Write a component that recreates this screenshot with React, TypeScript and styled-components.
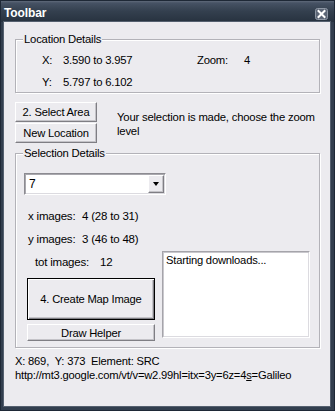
import styled, { createGlobalStyle } from 'styled-components'

const FACE = '#ecebef'

const GlobalStyle = createGlobalStyle`
  html, body {
    margin: 0;
    padding: 0;
  }
  body {
    font-family: "Liberation Sans", Arial, sans-serif;
    font-size: 11px;
    letter-spacing: -0.2px;
    color: #000;
  }
`

const Window = styled.div`
  width: 335px;
  height: 411px;
  box-sizing: border-box;
  display: flex;
  flex-direction: column;
  background: #323e4e;
  border: 1px solid #1e2836;
`

const TitleBar = styled.div`
  height: 21px;
  flex: none;
  display: flex;
  align-items: flex-start;
  justify-content: space-between;
  padding: 0 6px 0 3px;
  background: linear-gradient(#5f6a7b 0, #465264 2px, #34404f 10px, #27323f 100%);
`

const Title = styled.span`
  padding-top: 5px;
  line-height: 14px;
  font-size: 12px;
  font-weight: bold;
  color: #fff;
  letter-spacing: -0.1px;
`

const CloseBox = styled.svg`
  margin-top: 7px;
  display: block;
`

const Client = styled.div`
  flex: 1;
  margin: 0 4px 4px 3px;
  padding: 11px 10px 0 11px;
  background: ${FACE};
  box-shadow: 0 0 0 1px #55606f;
`

const Group = styled.fieldset`
  margin: 0;
  padding: 0;
  min-width: 0;
  border: 1px solid #b3b2b8;
  box-shadow: 1px 1px 0 #fff, inset 1px 1px 0 #fff;
`

const Legend = styled.legend`
  margin-left: 7px;
  padding: 0 1px;
  line-height: 13px;
  font-size: 11.3px;
  background: ${FACE};
`

const CoordGrid = styled.div`
  display: grid;
  grid-template-columns: 21px 134px 47px auto;
  row-gap: 8px;
  line-height: 14px;
  font-size: 11.3px;
  padding: 7px 0 3px 26px;
`

const ActionRow = styled.div`
  display: flex;
  gap: 20px;
  margin-top: 9px;
`

const ButtonStack = styled.div`
  display: flex;
  flex-direction: column;
  gap: 1px;
`

const Button = styled.button<{ $w: number; $h: number; $default?: boolean }>`
  width: ${({ $w }) => $w}px;
  height: ${({ $h }) => $h}px;
  box-sizing: border-box;
  margin: 0;
  padding: 0;
  font: inherit;
  letter-spacing: inherit;
  font-size: 11.2px;
  color: #000;
  background: ${FACE};
  border: 1px solid;
  border-color: ${({ $default }) => ($default ? '#000' : '#fff #7f7e84 #7f7e84 #fff')};
  box-shadow: ${({ $default }) =>
    $default
      ? 'inset 1px 1px 0 #fff, inset -1px -1px 0 #7f7e84, inset -2px -2px 0 #c4c3c8'
      : 'inset -1px -1px 0 #c4c3c8'};
`

const Hint = styled.p`
  margin: 8px 0 0;
  width: 205px;
  line-height: 14px;
  font-size: 11.3px;
`

const SelectionGroup = styled(Group)`
  margin-top: 4px;
`

const SelectionBody = styled.div`
  padding: 13px 0 6px 8px;
`

const Combo = styled.div`
  width: 142px;
  height: 22px;
  box-sizing: border-box;
  display: flex;
  align-items: stretch;
  background: #fff;
  border: 1px solid;
  border-color: #8c8b91 #fff #fff #8c8b91;
  box-shadow: inset 1px 1px 0 #a9a8ae, inset -1px -1px 0 #dcdbe0;
`

const ComboText = styled.span`
  flex: 1;
  padding: 3px 0 0 4px;
  font-size: 12px;
  line-height: 14px;
`

const ComboArrow = styled.span`
  width: 16px;
  margin: 1px;
  box-sizing: border-box;
  display: flex;
  align-items: center;
  justify-content: center;
  background: ${FACE};
  border: 1px solid;
  border-color: #fff #7f7e84 #7f7e84 #fff;
  box-shadow: inset -1px -1px 0 #c4c3c8;

  &::after {
    content: '';
    border-left: 3.5px solid transparent;
    border-right: 3.5px solid transparent;
    border-top: 4px solid #000;
  }
`

const Lower = styled.div`
  display: flex;
  margin-top: 14px;
`

const LeftCol = styled.div`
  width: 138px;
  flex: none;
  padding-left: 3px;
  box-sizing: border-box;
  display: flex;
  flex-direction: column;
`

const InfoList = styled.div`
  display: flex;
  flex-direction: column;
  gap: 9px;
  line-height: 14px;
  font-size: 11.5px;
`

const InfoRow = styled.div<{ $indent: number; $label: number }>`
  display: grid;
  grid-template-columns: ${({ $label }) => $label}px auto;
  padding-left: ${({ $indent }) => $indent}px;
`

const CreateButton = styled(Button)`
  margin-top: 9px;
`

const HelperButton = styled(Button)`
  margin-top: 4px;
`

const Log = styled.textarea`
  margin: 42px 0 0;
  width: 148px;
  height: 87px;
  box-sizing: border-box;
  padding: 1px 3px;
  resize: none;
  overflow: hidden;
  font: inherit;
  font-size: 11.2px;
  letter-spacing: inherit;
  line-height: 14px;
  color: #000;
  background: #fff;
  border: 1px solid;
  border-color: #a5a4aa #fff #fff #a5a4aa;
  box-shadow: inset 1px 1px 0 #c9c8cd, inset -1px -1px 0 #dcdbe0;
  outline: none;
`

const Status = styled.div`
  margin-top: 6px;
  line-height: 14px;
  font-size: 11.2px;
  white-space: pre;
`

const Mnemonic = styled.span`
  text-decoration: underline;
`

export default function App() {
  return (
    <>
      <GlobalStyle />
      <Window>
        <TitleBar>
          <Title>Toolbar</Title>
          <CloseBox width="13" height="12" viewBox="0 0 13 12">
            <rect x="0.5" y="0.5" width="12" height="11" rx="2" fill="#5c6676" stroke="#8e97a4" />
            <path d="M3.5 3 L9.5 9 M9.5 3 L3.5 9" stroke="#fff" strokeWidth="2" strokeLinecap="square" />
          </CloseBox>
        </TitleBar>
        <Client>
          <Group>
            <Legend>Location Details</Legend>
            <CoordGrid>
              <span>X:</span>
              <span>3.590 to 3.957</span>
              <span>Zoom:</span>
              <span>4</span>
              <span>Y:</span>
              <span>5.797 to 6.102</span>
            </CoordGrid>
          </Group>

          <ActionRow>
            <ButtonStack>
              <Button $w={82} $h={20}>2. Select Area</Button>
              <Button $w={82} $h={20}>New Location</Button>
            </ButtonStack>
            <Hint>Your selection is made, choose the zoom level</Hint>
          </ActionRow>

          <SelectionGroup>
            <Legend>Selection Details</Legend>
            <SelectionBody>
              <Combo>
                <ComboText>7</ComboText>
                <ComboArrow />
              </Combo>
              <Lower>
                <LeftCol>
                  <InfoList>
                    <InfoRow $indent={1} $label={54}>
                      <span>x images:</span>
                      <span>4 (28 to 31)</span>
                    </InfoRow>
                    <InfoRow $indent={1} $label={54}>
                      <span>y images:</span>
                      <span>3 (46 to 48)</span>
                    </InfoRow>
                    <InfoRow $indent={8} $label={65}>
                      <span>tot images:</span>
                      <span>12</span>
                    </InfoRow>
                  </InfoList>
                  <CreateButton $w={128} $h={42} $default>4. Create Map Image</CreateButton>
                  <HelperButton $w={128} $h={17}>Draw Helper</HelperButton>
                </LeftCol>
                <Log readOnly value="Starting downloads..." />
              </Lower>
            </SelectionBody>
          </SelectionGroup>

          <Status>
            {'X: 869,  Y: 373  Element: SRC'}
            <br />
            {'http://mt3.google.com/vt/v=w2.99hl=itx=3y=6z=4'}
            <Mnemonic>s</Mnemonic>
            {'=Galileo'}
          </Status>
        </Client>
      </Window>
    </>
  )
}
